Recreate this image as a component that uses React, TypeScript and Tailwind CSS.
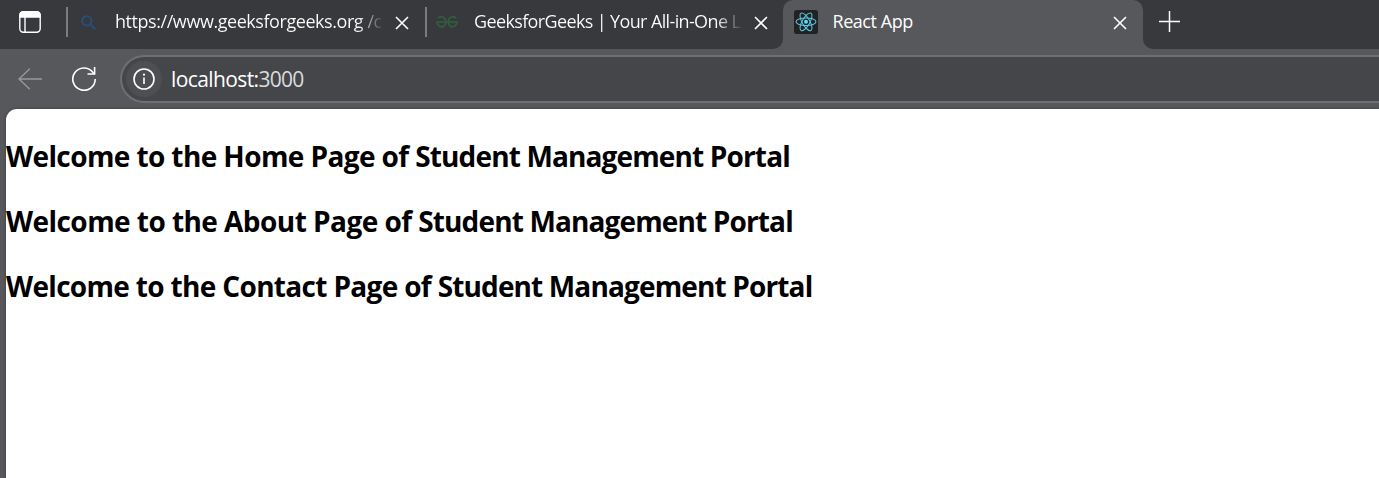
import React from "react";

const CloseIcon = () => (
  <svg className="block h-[14px] w-[14px] shrink-0" viewBox="0 0 14 14" fill="none" stroke="#fff" strokeWidth="1.6">
    <path d="M1 1L13 13M13 1L1 13" />
  </svg>
);

const TabLayoutIcon = () => (
  <svg className="ml-[19px] h-[22px] w-[22px] shrink-0" viewBox="0 0 22 22" fill="none" stroke="#fff" strokeWidth="1.4">
    <rect x="0.8" y="0.8" width="20.4" height="20.4" rx="3.6" />
    <path d="M1 6V4Q1 1 4 1H18Q21 1 21 4V6Z" fill="#fff" />
    <path d="M6 6V21" />
  </svg>
);

const SearchIcon = () => (
  <svg className="h-[15px] w-[15px] shrink-0" viewBox="0 0 16 16" fill="none" stroke="#23517c" strokeWidth="2.1">
    <circle cx="6.2" cy="6.2" r="5" />
    <path d="M9.8 9.8L15.2 15.2" />
  </svg>
);

const GeeksIcon = () => (
  <svg className="h-[12px] w-[22px] shrink-0" viewBox="0 0 22 12" fill="none" stroke="#2f6040" strokeWidth="1.6">
    <path d="M1.8 1.8C3.6.6 7 .4 8.7 2.5C10.6 5 10 8.7 7.6 10.2C5.1 11.7 1.3 10.3 1 6H21C20.7 10.3 16.9 11.7 14.4 10.2C12 8.7 11.4 5 13.3 2.5C15 .4 18.4.6 20.2 1.8" />
  </svg>
);

const ReactIcon = () => (
  <svg className="h-6 w-6 shrink-0" viewBox="0 0 24 24">
    <rect width="24" height="24" rx="2.5" fill="#222222" />
    <g fill="none" stroke="#5ac8e6" strokeWidth="1.05">
      <ellipse cx="12" cy="11.8" rx="10" ry="3.8" />
      <ellipse cx="12" cy="11.8" rx="10" ry="3.8" transform="rotate(60 12 11.8)" />
      <ellipse cx="12" cy="11.8" rx="10" ry="3.8" transform="rotate(120 12 11.8)" />
    </g>
    <circle cx="12" cy="11.8" r="2" fill="#61dafb" />
  </svg>
);

const Divider = () => <div className="h-[30px] w-[1.5px] shrink-0 bg-[#7b7c7f]" />;

const pages = [
  { name: "Home", spacing: "tracking-[-0.6px]" },
  { name: "About", spacing: "tracking-[-0.55px]" },
  { name: "Contact", spacing: "tracking-[-0.67px]" },
];

export default function App() {
  return (
    <div className="flex h-[478px] w-full flex-col overflow-hidden bg-[#57585c] font-['Open_Sans','Noto_Sans',sans-serif]">
      <div className="flex h-[49px] shrink-0 bg-[#57585c] text-[18px] leading-[24px] text-white">
        <div className="flex h-[49px] w-[783px] shrink-0 items-center rounded-br-[10px] bg-[#38393c] pb-[5px]">
          <TabLayoutIcon />
          <div className="ml-[25px] flex w-[359px] shrink-0 items-center">
            <Divider />
            <div className="ml-[13px] flex"><SearchIcon /></div>
            <div className="mb-[2px] ml-[19.5px] w-[269px] shrink-0 whitespace-nowrap bg-linear-to-r from-white from-90% to-transparent bg-clip-text text-transparent">
              <span className="tracking-[-0.44px]">https://www.geeksforgeeks.org /c</span>
            </div>
            <div className="ml-[11px] mt-[2px]"><CloseIcon /></div>
          </div>
          <div className="flex shrink-0 items-center">
            <Divider />
            <div className="ml-[9.5px] flex"><GeeksIcon /></div>
            <div className="mb-[2px] ml-[16px] w-[269px] shrink-0 whitespace-nowrap bg-linear-to-r from-white from-90% to-transparent bg-clip-text text-transparent">
              <span className="tracking-[-0.63px]">GeeksforGeeks | Your All-in-One L</span>
            </div>
            <div className="ml-[11px] mt-[2px]"><CloseIcon /></div>
          </div>
        </div>
        <div className="h-[49px] w-[360px] shrink-0 bg-[#38393c]">
          <div className="flex h-[49px] items-center rounded-t-[10px] bg-[#57585c] pb-[5px] pl-[11px]">
            <ReactIcon />
            <span className="mb-[2px] ml-[14.5px] tracking-[-0.45px]">React App</span>
            <div className="ml-auto mr-[16px] mt-[2px]"><CloseIcon /></div>
          </div>
        </div>
        <div className="flex h-[49px] flex-1 items-center rounded-bl-[10px] bg-[#38393c] pb-[6px] pl-[16px]">
          <svg className="h-[21px] w-[21px]" viewBox="0 0 21 21" stroke="#fff" strokeWidth="1.5">
            <path d="M10.5 0V21M0 10.5H21" />
          </svg>
        </div>
      </div>

      <div className="flex h-[60px] shrink-0 items-center">
        <svg className="ml-[18px] h-[22px] w-[24px] shrink-0" viewBox="0 0 24 22" fill="none" stroke="#97989b" strokeWidth="1.4">
          <path d="M11.8 .8L1 11L11.8 21.2M1 11H24" />
        </svg>
        <svg className="ml-[30px] h-[24px] w-[24px] shrink-0" viewBox="0 0 24 24" fill="none" stroke="#fff" strokeWidth="1.6">
          <path d="M23.2 12A11.2 11.2 0 1 1 20.8 5.2L22.6 7" />
          <path d="M22.6 0V7H15.5" />
        </svg>
        <div className="ml-[24px] flex h-[48px] flex-1 items-center rounded-l-full border-y-2 border-l-2 border-[#6e6f72] bg-[#454649]">
          <div className="ml-[4px] flex h-9 w-9 shrink-0 items-center justify-center rounded-full bg-[#4e4f52]">
            <svg className="h-[22px] w-[22px]" viewBox="0 0 22 22" fill="none" stroke="#fff" strokeWidth="1.6">
              <circle cx="11" cy="11" r="10" />
              <path d="M11 9.4V16" />
              <circle cx="11" cy="6.7" r="1.1" fill="#fff" stroke="none" />
            </svg>
          </div>
          <span className="ml-[9px] text-[21px] leading-[28px] tracking-[-0.6px] text-white">
            localhost:<span className="tracking-[-0.75px] text-[#dcdcdd]">3000</span>
          </span>
        </div>
      </div>

      <main className="ml-[6px] flex-1 rounded-tl-[11px] bg-white pt-[29px] shadow-[0_0_3px_rgba(0,0,0,0.35)]">
        {pages.map((page) => (
          <h2 key={page.name} className="mb-[29px] h-[36px] whitespace-nowrap text-[28px] font-bold leading-[36px] tracking-[-0.86px] text-black">
            <span className={page.spacing}>Welcome to the {page.name} Page of </span>
            Student Management Portal
          </h2>
        ))}
      </main>
    </div>
  );
}
